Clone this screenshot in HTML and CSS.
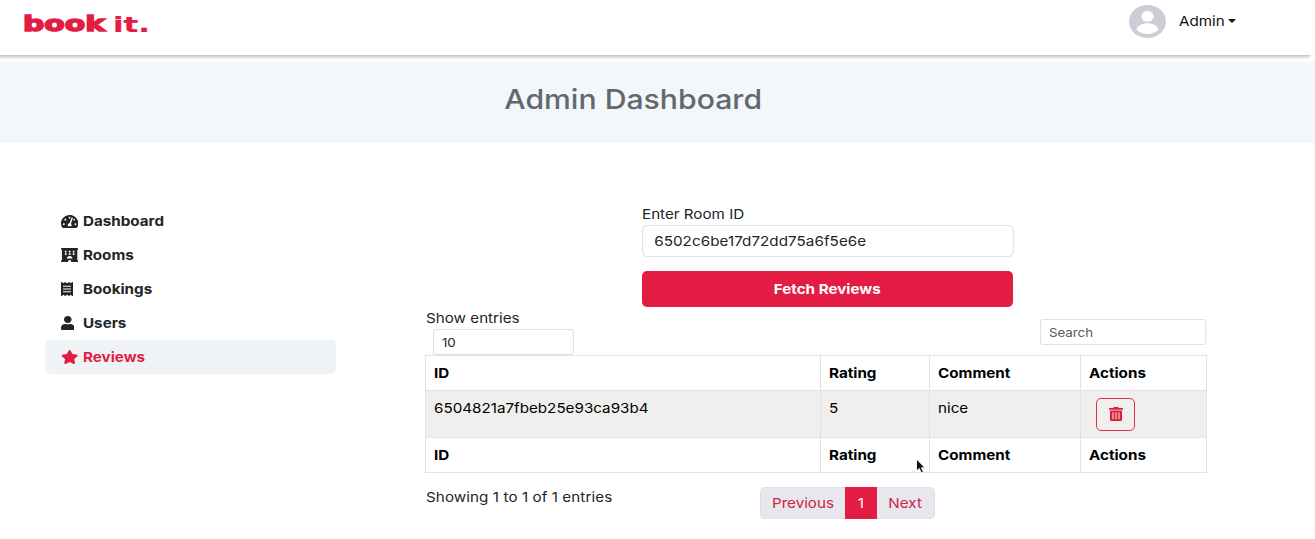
FILE: index.html
```html
<!DOCTYPE html>
<html lang="en">
<head>
<meta charset="utf-8">
<title>Book It - Admin</title>
<link rel="stylesheet" href="styles.css">
</head>
<body>
<header class="navbar">
  <svg class="logo" viewBox="0 0 128 24" role="img" aria-label="book it.">
    <text class="logo-text" x="1" y="19" textLength="82" lengthAdjust="spacingAndGlyphs">book</text>
    <text class="logo-text logo-light" x="91" y="19.500" textLength="37" lengthAdjust="spacingAndGlyphs">it.</text>
  </svg>
  <div class="account">
    <svg class="avatar" viewBox="0 0 36 33" preserveAspectRatio="none">
      <ellipse cx="18" cy="16.5" rx="18" ry="16.5" fill="#cdcdd5"/>
      <ellipse cx="18" cy="11.3" rx="6" ry="5.5" fill="#fff"/>
      <path d="M7 24.2C9.500 20.500 12.500 18.300 18 18.300S26.500 20.500 29 24.200C26 27.500 22.500 28.900 18 28.900S10 27.500 7 24.200Z" fill="#fff"/>
    </svg>
    <span class="account-name"><span class="wide">Admin</span></span>
    <span class="caret"></span>
  </div>
</header>
<section class="hero"><h1 class="hero-title">Admin Dashboard</h1></section>
<div class="content">
  <nav class="sidebar">
    <a class="side-link"><span class="side-icon"><svg width="17.300" height="13" viewBox="0 32 576 448" preserveAspectRatio="none"><path fill="currentColor" d="M288 32C128.940 32 0 160.940 0 320c0 52.800 14.250 102.260 39.060 144.800 5.610 9.620 16.300 15.200 27.440 15.200h443c11.140 0 21.830-5.580 27.440-15.200C561.750 422.260 576 372.800 576 320c0-159.060-128.940-288-288-288zm0 64c14.710 0 26.580 10.130 30.320 23.650-1.110 2.260-2.640 4.230-3.450 6.670l-9.220 27.670c-5.130 3.490-10.970 6.010-17.640 6.010-17.670 0-32-14.330-32-32S270.330 96 288 96zM96 384c-17.670 0-32-14.330-32-32s14.330-32 32-32 32 14.330 32 32-14.330 32-32 32zm48-160c-17.670 0-32-14.330-32-32s14.330-32 32-32 32 14.330 32 32-14.330 32-32 32zm246.770-72.410l-61.330 184C343.130 347.330 352 364.540 352 384c0 11.720-3.380 22.550-8.880 32H232.880c-5.500-9.450-8.880-20.280-8.880-32 0-33.940 26.500-61.430 59.900-63.590l61.340-184.010c4.170-12.560 17.730-19.450 30.360-15.170 12.570 4.190 19.350 17.790 15.170 30.360zm14.660 57.200l15.520-46.550c3.470-1.290 7.130-2.230 11.050-2.230 17.670 0 32 14.330 32 32s-14.330 32-32 32c-11.380-.01-20.890-6.280-26.570-15.220zM480 384c-17.670 0-32-14.330-32-32s14.330-32 32-32 32 14.330 32 32-14.330 32-32 32z"/></svg></span><span class="wide">Dashboard</span></a>
    <a class="side-link"><span class="side-icon"><svg width="17.300" height="14" viewBox="0 0 576 512" preserveAspectRatio="none"><path fill="currentColor" fill-rule="evenodd" d="M16 0H560Q576 0 576 16V48Q576 64 560 64H544V448H560Q576 448 576 464V496Q576 512 560 512H336V448H240V512H16Q0 512 0 496V464Q0 448 16 448H32V64H16Q0 64 0 48V16Q0 0 16 0ZM128 96V160H184V96ZM260 96V160H316V96ZM392 96V160H448V96ZM128 192V256H184V192ZM260 192V256H316V192ZM392 192V256H448V192ZM192 384H384C384 331 341 288 288 288S192 331 192 384Z"/></svg></span><span class="wide">Rooms</span></a>
    <a class="side-link"><span class="side-icon"><svg width="12" height="14" viewBox="0 0 384 512" preserveAspectRatio="none"><path fill="currentColor" fill-rule="evenodd" d="M0 12L26 3L80 48L128 0L192 48L256 0L304 48L358 3L384 12V500L358 509L304 464L256 512L192 464L128 512L80 464L26 509L0 500ZM64 140V178H320V140ZM64 237V275H320V237ZM64 334V372H320V334Z"/></svg></span><span class="wide">Bookings</span></a>
    <a class="side-link"><span class="side-icon"><svg width="13.500" height="14" viewBox="0 0 448 512" preserveAspectRatio="none"><path fill="currentColor" d="M224 256c70.700 0 128-57.300 128-128S294.700 0 224 0 96 57.300 96 128s57.300 128 128 128zm89.600 32h-16.700c-22.200 10.200-46.900 16-72.900 16s-50.600-5.800-72.900-16h-16.700C60.200 288 0 348.200 0 422.400V464c0 26.500 21.500 48 48 48h352c26.500 0 48-21.500 48-48v-41.600c0-74.200-60.200-134.400-134.400-134.400z"/></svg></span><span class="wide">Users</span></a>
    <a class="side-link active"><span class="side-icon"><svg width="17.300" height="14" viewBox="0 0 576 512" preserveAspectRatio="none"><path fill="currentColor" d="M259.300 17.800L194 150.200 47.900 171.500c-26.200 3.800-36.700 36.100-17.700 54.600l105.700 103-25 145.500c-4.500 26.300 23.200 46 46.400 33.700L288 439.600l130.700 68.700c23.200 12.200 50.900-7.400 46.400-33.700l-25-145.500 105.700-103c19-18.500 8.500-50.800-17.700-54.600L382 150.200 316.700 17.800c-11.700-23.600-45.600-23.900-57.400 0z"/></svg></span><span class="wide">Reviews</span></a>
  </nav>
  <main class="main">
    <form class="room-form">
      <label class="room-label" for="room"><span class="wide">Enter Room ID</span></label>
      <input class="room-input wide" id="room" type="text" value="6502c6be17d72dd75a6f5e6e">
      <button class="fetch" type="button"><span class="wide centered">Fetch Reviews</span></button>
    </form>
    <div class="table-tools">
      <div class="entries"><label class="entries-label" for="count"><span class="wide">Show entries</span></label><input class="small-input wide count" id="count" type="text" value="10"></div>
      <div class="search-box"><input class="small-input wide search" type="text" placeholder="Search"></div>
    </div>
    <table class="reviews">
      <colgroup><col class="c-id"><col class="c-rating"><col class="c-comment"><col class="c-actions"></colgroup>
      <thead><tr><th><span class="wide">ID</span></th><th><span class="wide">Rating</span></th><th><span class="wide">Comment</span></th><th><span class="wide">Actions</span></th></tr></thead>
      <tbody><tr><td><span class="wide">6504821a7fbeb25e93ca93b4</span></td><td><span class="wide">5</span></td><td><span class="wide">nice</span></td><td class="action-cell"><button class="delete" type="button" aria-label="Delete"><svg width="14" height="14" viewBox="0 0 448 512" preserveAspectRatio="none"><path fill="currentColor" fill-rule="evenodd" d="M432 32H312l-9.400-18.700A24 24 0 0 0 281.100 0H166.800a23.700 23.700 0 0 0-21.400 13.300L136 32H16A16 16 0 0 0 0 48v32a16 16 0 0 0 16 16h416a16 16 0 0 0 16-16V48a16 16 0 0 0-16-16zM32 128V464a48 48 0 0 0 48 48h288a48 48 0 0 0 48-48V128ZM112 192H144V448H112ZM208 192H240V448H208ZM304 192H336V448H304Z"/></svg></button></td></tr></tbody>
      <tfoot><tr><th><span class="wide">ID</span></th><th><span class="wide">Rating</span></th><th><span class="wide">Comment</span></th><th><span class="wide">Actions</span></th></tr></tfoot>
    </table>
    <div class="table-footer">
      <span class="summary"><span class="wide">Showing 1 to 1 of 1 entries</span></span>
      <div class="pager"><a class="page prev"><span class="wide centered">Previous</span></a><a class="page current"><span class="wide centered">1</span></a><a class="page next"><span class="wide centered">Next</span></a></div>
    </div>
  </main>
</div>
<svg class="cursor" viewBox="0 0 12 17"><path d="M1.500 1V13L4.300 10.500L6.300 15L8.400 14L6.500 9.800H10Z" fill="#111" stroke="#fff" stroke-width=".9"/></svg>
</body>
</html>
```
FILE: styles.css
```css
* { box-sizing: border-box; }
body {
  margin: 0;
  height: 539px;
  overflow: hidden;
  position: relative;
  background: #fff;
  color: #212529;
  font: 400 13.7px/22px Inter, sans-serif;
}
input, button { font: inherit; color: inherit; }
/* Extended-width lettering */
.wide { display: inline-block; transform: scaleX(1.11); transform-origin: left center; white-space: nowrap; }
.centered { transform-origin: center; }
.navbar {
  height: 55px;
  display: flex;
  justify-content: space-between;
  padding: 0 76px 0 27px;
  margin: 0 3px 0 -5px;
  box-shadow: 0 4px 3px -2px rgba(0, 0, 0, .26);
}
.logo { width: 128px; height: 24px; margin-top: 12px; overflow: visible; }
.logo-text {
  font: 700 21.5px "DejaVu Sans", sans-serif;
  fill: #e31c43;
  stroke: #e31c43;
  stroke-width: 1.5px;
}
.logo-light { stroke-width: 0.2px; }
.account { display: flex; align-items: flex-start; color: #111; padding-top: 5px; }
.avatar { width: 37px; height: 33px; margin-right: 12.5px; }
.account-name { margin-top: 5px; width: 45px; white-space: nowrap; }
.caret { margin: 14px 0 0 4.5px; border: 4px solid transparent; border-top-color: #111; border-bottom: 0; }
.hero { height: 81px; margin-top: 7px; background: #f4f7fa; padding-right: 49px; display: flex; justify-content: center; }
.hero-title { margin: 21px 0 0; font-size: 27.2px; line-height: 34px; font-weight: 500; color: #62696e; transform: scaleX(1.11); }
.content { display: flex; padding: 61px 109px 0 45px; justify-content: space-between; }
.sidebar { width: 291px; }
.side-link { height: 34px; display: flex; align-items: center; padding-left: 15.5px; border-radius: 5px; font-weight: 700; color: #212529; }
.side-icon { width: 22.5px; display: flex; }
.side-link.active { background: #f0f3f6; color: #e31c43; }
.main { width: 781px; }
.room-form { width: 371px; margin-left: 217px; display: flex; flex-direction: column; }
.room-label { line-height: 21px; }
.room-input { width: 334.5px; height: 32px; border: 1px solid #dfe1e6; border-radius: 5px; padding: 0 10px 1px; background: #fff; letter-spacing: 0.05px; }
.fetch { height: 36px; margin-top: 14px; border: 0; border-radius: 5px; background: #e31c43; color: #fff; font-weight: 700; }
.table-tools { display: flex; justify-content: space-between; height: 48px; }
.entries { display: flex; flex-direction: column; }
.entries-label { padding-left: 0.5px; }
.small-input { height: 26px; border: 1px solid #dfe1e6; border-radius: 3px; padding: 0 7px; font-size: 12px; background: #fff; }
.count { width: 127px; margin-left: 8px; }
.search-box { width: 166px; padding-top: 12px; display: flex; }
.search { width: 150px; }
.search::placeholder { color: #55595d; opacity: 1; }
.reviews { width: 781px; table-layout: fixed; border-collapse: collapse; color: #000; }
.reviews th, .reviews td { border: 1px solid #dfe2e6; padding: 6px 8px; text-align: left; vertical-align: top; height: 35px; }
.reviews td { background: #f0efee; height: 47px; }
.reviews .action-cell { padding: 7px 15px 6px; }
.c-id { width: 395px; }
.c-rating { width: 109px; }
.c-comment { width: 151px; }
.c-actions { width: 126px; }
.delete { width: 39px; height: 33px; display: flex; align-items: center; justify-content: center; border: 1px solid #d4334b; border-radius: 5px; background: transparent; color: #dc2039; padding: 0 0 2px; }
.table-footer { display: flex; padding-top: 13px; }
.summary { width: 335px; padding-left: 0.5px; white-space: nowrap; letter-spacing: 0.07px; }
.pager { display: flex; height: 32px; margin-top: 1px; }
.page { display: flex; align-items: center; justify-content: center; color: #d12145; background: #e8e7ed; border: 1px solid #dce1e8; }
.prev { width: 85px; border-right: 0; border-radius: 5px 0 0 5px; }
.page.current { width: 32px; border-color: #e31c43; background: #e31c43; color: #fff; }
.next { width: 58px; border-left: 0; border-radius: 0 5px 5px 0; }
.cursor { position: absolute; left: 915px; top: 458px; width: 12px; height: 17px; }
```
